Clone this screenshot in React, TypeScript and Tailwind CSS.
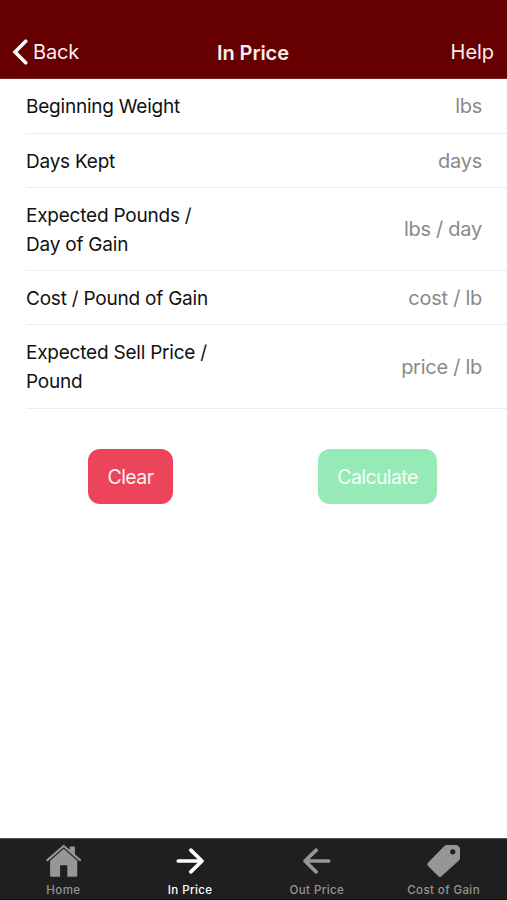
const fields = [
  { label: "Beginning Weight", unit: "lbs", row: "h-[55px]" },
  { label: "Days Kept", unit: "days", row: "h-[54px]" },
  { label: "Expected Pounds / Day of Gain", unit: "lbs / day", row: "h-[83px]" },
  { label: "Cost / Pound of Gain", unit: "cost / lb", row: "h-[54px]" },
  { label: "Expected Sell Price / Pound", unit: "price / lb", row: "h-[84px]" },
];

const HomeIcon = () => (
  <svg width="36" height="34" viewBox="0 0 36 34" fill="none">
    <path d="M2.4 16.2 18.7 2 35 16.2" stroke="currentColor" strokeWidth="2.2" strokeLinecap="round" strokeLinejoin="round" />
    <path d="M24.6 2.4h5.3v8.8L24.6 6.5z" fill="currentColor" />
    <path d="M18.7 4.8 32.3 16.8V31.4a1.4 1.4 0 0 1-1.4 1.4h-8.6V21.2h-7.2v11.6H6.5a1.4 1.4 0 0 1-1.4-1.4V16.8z" fill="currentColor" />
  </svg>
);

const ArrowIcon = ({ left = false }: { left?: boolean }) => (
  <svg className={left ? "-scale-x-100" : ""} width="36" height="34" viewBox="0 0 36 34" fill="none">
    <path d="M6.3 17H30M18.8 6.2 30 17 18.8 27.8" stroke="currentColor" strokeWidth="3.7" strokeLinecap="round" strokeLinejoin="round" />
  </svg>
);

const TagIcon = () => (
  <svg width="36" height="34" viewBox="0 0 36 34">
    <path
      fill="currentColor"
      fillRule="evenodd"
      d="M20.6 1h9.6q.9 0 1.5.6l1.7 1.7q.6.6.6 1.5v9.4q0 1.2-.9 2.1L15.5 32.3q-1.6 1.6-3.2 0L2 22q-1.6-1.6 0-3.2L18.3 2q1-1 2.3-1zM26.8 5.2a2.6 2.6 0 1 0 0 5.2 2.6 2.6 0 0 0 0-5.2z"
    />
  </svg>
);

const tabs = [
  { name: "Home", icon: <HomeIcon />, active: false },
  { name: "In Price", icon: <ArrowIcon />, active: true },
  { name: "Out Price", icon: <ArrowIcon left />, active: false },
  { name: "Cost of Gain", icon: <TagIcon />, active: false },
];

const Header = () => (
  <header className="grid grid-cols-3 items-center h-[79px] pt-[26px] pl-3 pr-[13px] bg-[#660000] text-[#fbeeee] text-[20px] leading-none border-b border-[#752020]">
    <button className="flex items-center gap-[5px] tracking-[-0.2px]">
      <svg width="16" height="26" viewBox="0 0 16 26" fill="none">
        <path d="M13.7 2.2 3 13l10.7 10.8" stroke="white" strokeWidth="3.6" strokeLinecap="round" strokeLinejoin="miter" />
      </svg>
      <span>Back</span>
    </button>
    <h1 className="pt-px text-center font-semibold text-[20px] tracking-[-0.1px]">In Price</h1>
    <button className="text-right tracking-[-0.05px]">Help</button>
  </header>
);

const App = () => {
  return (
    <div className="flex flex-col h-[900px] w-full bg-white font-['Inter',sans-serif]">
      <Header />
      <main className="flex-1">
        {fields.map((field) => (
          <div key={field.label} className={`flex items-center justify-between ml-[26px] pr-[25px] border-b border-[#ececec] ${field.row}`}>
            <label className="w-[192px] pt-px text-[19px] leading-[29px] tracking-[-0.22px] text-[#111111]">{field.label}</label>
            <span className="text-[20px] tracking-[-0.27px] text-[#8a8a8a]">{field.unit}</span>
          </div>
        ))}
        <div className="flex justify-between pt-10 pl-[88px] pr-[70px]">
          <button className="w-[85px] h-[55px] pt-[3px] rounded-xl bg-[#ec445a] text-[#fff0f0] text-[19.5px] tracking-[-0.6px]">Clear</button>
          <button className="w-[119px] h-[55px] pt-[3px] rounded-xl bg-[#96eab7] text-[#f5fff5] text-[19.5px] tracking-[-0.6px]">Calculate</button>
        </div>
      </main>
      <nav className="grid grid-cols-4 h-[62px] bg-[#1f1f1f] border-t border-t-[#555555] border-b border-b-[#0c0c0c]">
        {tabs.map((tab) => (
          <button key={tab.name} className={`flex flex-col items-center pt-[5px] ${tab.active ? "text-white" : "text-[#969696]"}`}>
            {tab.icon}
            <span className="mt-1 text-[11.5px] leading-4 font-medium tracking-[0.4px]">{tab.name}</span>
          </button>
        ))}
      </nav>
    </div>
  );
};

export default App;
